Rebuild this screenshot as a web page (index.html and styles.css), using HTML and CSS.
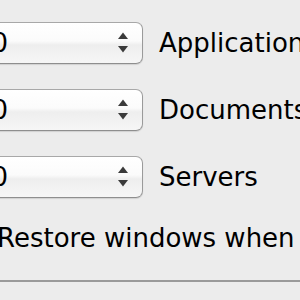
FILE: index.html
```html
<!DOCTYPE html>
<html>
<head>
<meta charset="utf-8">
<link rel="stylesheet" href="styles.css">
</head>
<body>
<div class="pane">
  <div class="rows">
    <div class="row">
      <div class="popup"><span class="value">10</span>
        <svg class="arrows" width="12" height="22" viewBox="0 0 12 22"><path d="M6 0.5 L11 7 L1 7 Z" fill="#3a3a3a"/><path d="M1 14 L11 14 L6 20.5 Z" fill="#3a3a3a"/></svg>
      </div>
      <span class="label">Applications</span>
    </div>
    <div class="row">
      <div class="popup"><span class="value">10</span>
        <svg class="arrows" width="12" height="22" viewBox="0 0 12 22"><path d="M6 0.5 L11 7 L1 7 Z" fill="#3a3a3a"/><path d="M1 14 L11 14 L6 20.5 Z" fill="#3a3a3a"/></svg>
      </div>
      <span class="label">Documents</span>
    </div>
    <div class="row">
      <div class="popup"><span class="value">10</span>
        <svg class="arrows" width="12" height="22" viewBox="0 0 12 22"><path d="M6 0.5 L11 7 L1 7 Z" fill="#3a3a3a"/><path d="M1 14 L11 14 L6 20.5 Z" fill="#3a3a3a"/></svg>
      </div>
      <span class="label">Servers</span>
    </div>
  </div>
  <div class="restore">Restore windows when quitting and re-opening apps</div>
  <div class="separator"></div>
</div>
</body>
</html>
```
FILE: styles.css
```css
html, body {
  margin: 0;
  padding: 0;
  background: #ececec;
  overflow: hidden;
}
body {
  width: 300px;
  height: 300px;
  font-family: "DejaVu Sans", sans-serif;
  font-size: 26px;
  color: #000;
}
.pane {
  padding-top: 22px;
  margin-left: -40px;
  width: 400px;
}
.rows {
  display: flex;
  flex-direction: column;
  gap: 25px;
}
.row {
  display: flex;
  align-items: center;
  gap: 16px;
}
.popup {
  box-sizing: border-box;
  width: 183px;
  height: 42px;
  border: 1px solid #9a9a9a;
  border-top-color: #a8a8a8;
  border-bottom-color: #8e8e8e;
  border-radius: 7px;
  background: linear-gradient(#ffffff, #fbfbfb 45%, #eeeeee 55%, #f6f6f6);
  box-shadow: 0 1px 1px rgba(0,0,0,0.12);
  display: flex;
  align-items: center;
  justify-content: space-between;
  padding: 0 13px 0 14px;
}
.value {
  line-height: 1;
}
.arrows {
  display: block;
}
.label {
  white-space: nowrap;
}
.restore {
  margin-top: 25px;
  margin-left: 37px;
  white-space: nowrap;
  line-height: 30px;
}
.separator {
  margin-top: 27px;
  height: 2px;
  background: #9a9a9a;
}
```
